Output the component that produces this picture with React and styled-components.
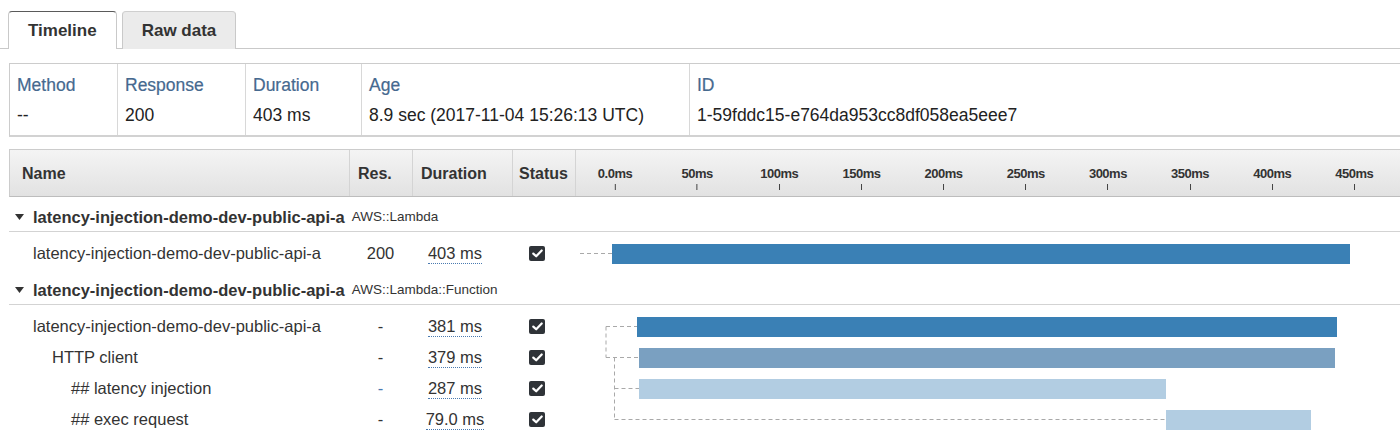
import React, { useState } from "react";
import styled, { createGlobalStyle } from "styled-components";

const GlobalStyle = createGlobalStyle`
  body {
    margin: 0;
    background: #ffffff;
    font-family: "Liberation Sans", Arial, Helvetica, sans-serif;
    color: #333333;
  }
`;

const MS_PX = 82.15 / 50;
const ZERO_X = 39;
const toX = (ms) => ZERO_X + ms * MS_PX;

const summary = [
  { label: "Method", value: "--", width: "108px" },
  { label: "Response", value: "200", width: "128px" },
  { label: "Duration", value: "403 ms", width: "116px" },
  { label: "Age", value: "8.9 sec (2017-11-04 15:26:13 UTC)", width: "328px" },
  { label: "ID", value: "1-59fddc15-e764da953cc8df058ea5eee7", width: "1fr" },
];

const ticks = [0, 50, 100, 150, 200, 250, 300, 350, 400, 450];

const groups = [
  {
    name: "latency-injection-demo-dev-public-api-a",
    type: "AWS::Lambda",
    rows: [
      { name: "latency-injection-demo-dev-public-api-a", level: 0, res: "200", duration: "403 ms", start: -1, end: 448 },
    ],
    links: [{ x: 5, from: 0, to: 0 }],
  },
  {
    name: "latency-injection-demo-dev-public-api-a",
    type: "AWS::Lambda::Function",
    rows: [
      { name: "latency-injection-demo-dev-public-api-a", level: 0, res: "-", duration: "381 ms", start: 14.3, end: 440 },
      { name: "HTTP client", level: 1, res: "-", duration: "379 ms", start: 15.5, end: 438.8 },
      { name: "## latency injection", level: 2, res: "-", duration: "287 ms", start: 15.5, end: 336, resBlue: true },
      { name: "## exec request", level: 2, res: "-", duration: "79.0 ms", start: 336, end: 424.2 },
    ],
    links: [
      { x: 31, from: 0, to: 1 },
      { x: 39.5, from: 1, to: 3, children: [2, 3] },
    ],
  },
];

const barColors = ["#3a80b5", "#7aa0c1", "#b2cde2"];
const COLS = "340px 63px 100px 63px 1fr";
const ROW_H = 31;

const Page = styled.div`
  padding-top: 11px;
  width: 1400px;
  overflow: hidden;
`;

const TabBar = styled.div`
  display: flex;
  gap: 5px;
  padding-left: 8px;
  border-bottom: 1px solid #c9c9c9;
  height: 37px;
`;

const Tab = styled.button`
  height: 38px;
  padding: 0 19px;
  font-family: inherit;
  font-size: 17px;
  font-weight: bold;
  color: #333;
  border: 1px solid #c9c9c9;
  border-bottom: none;
  border-top: ${(p) => (p.$active ? "1px solid #5a5a5a" : "1px solid #cfcfcf")};
  border-radius: 4px 4px 0 0;
  background: ${(p) => (p.$active ? "#ffffff" : "#ebebeb")};
  cursor: pointer;
  position: relative;
  z-index: ${(p) => (p.$active ? 1 : 0)};
`;

const Summary = styled.div`
  display: grid;
  grid-template-columns: ${summary.map((s) => s.width).join(" ")};
  margin: 14px 0 0 9px;
  border-top: 1px solid #cccccc;
  border-bottom: 2px solid #d2d2d2;
  border-left: 1px solid #cccccc;
`;

const SummaryCell = styled.div`
  display: flex;
  flex-direction: column;
  gap: 6px;
  padding: 9px 8px 8px 7px;
  border-right: 1px solid #d8d8d8;
  font-size: 17.5px;
  line-height: 24px;
  &:last-child {
    border-right: none;
  }
`;

const SummaryLabel = styled.div`
  color: #46698f;
  white-space: nowrap;
  -webkit-text-stroke: 0.2px #46698f;
`;

const SummaryValue = styled.div`
  color: #222;
  white-space: nowrap;
`;

const Table = styled.div`
  margin: 12px 0 0 9px;
`;

const HeaderRow = styled.div`
  display: grid;
  grid-template-columns: ${COLS};
  height: 46px;
  background: linear-gradient(#f4f4f4, #e2e2e2);
  border-top: 1px solid #cccccc;
  border-bottom: 1px solid #bdbdbd;
  border-left: 1px solid #cccccc;
`;

const HeadCell = styled.div`
  display: flex;
  align-items: center;
  padding-left: ${(p) => p.$pad || 8}px;
  padding-top: 2px;
  font-size: 16px;
  font-weight: bold;
  color: #333;
  border-right: 1px solid #d4d4d4;
  position: relative;
  &:last-child {
    border-right: none;
  }
`;

const Tick = styled.div`
  position: absolute;
  top: 16px;
  transform: translateX(-50%);
  display: flex;
  flex-direction: column;
  align-items: center;
  gap: 3px;
  font-size: 13px;
  line-height: 15px;
  letter-spacing: -0.5px;
  color: #333;
  &::after {
    content: "";
    width: 1px;
    height: 6px;
    background: #444;
  }
`;

const GroupRow = styled.div`
  display: flex;
  align-items: center;
  gap: 7px;
  height: 35px;
  padding: 8px 0 3px 6px;
  box-sizing: border-box;
  border-bottom: 1px solid #d3d3d3;
`;

const GroupName = styled.span`
  display: flex;
  align-items: center;
  gap: 9px;
  font-size: 16.5px;
  font-weight: bold;
  color: #333;
  line-height: 24px;
`;

const GroupType = styled.span`
  font-size: 13.5px;
  color: #333;
`;

const GroupBody = styled.div`
  position: relative;
  padding: ${(p) => p.$padTop}px 0 ${(p) => p.$padBottom}px;
`;

const Row = styled.div`
  display: grid;
  grid-template-columns: ${COLS};
  height: ${ROW_H}px;
  align-items: center;
  font-size: 16.5px;
  color: #333;
`;

const NameCell = styled.div`
  padding-left: ${(p) => 24 + p.$level * 19}px;
  white-space: nowrap;
`;

const ResCell = styled.div`
  text-align: center;
  color: ${(p) => (p.$blue ? "#4a7ab0" : "#333")};
`;

const DurationCell = styled.div`
  text-align: center;
  padding-right: 14px;
`;

const Dotted = styled.span`
  border-bottom: 1px dotted #4a7ab0;
  padding-bottom: 1px;
`;

const StatusCell = styled.div`
  padding-left: 17px;
  display: flex;
  align-items: center;
`;

const CheckBox = styled.span`
  width: 16px;
  height: 15px;
  border-radius: 2px;
  background: #2f3338;
  display: inline-flex;
  align-items: center;
  justify-content: center;
`;

const TimeCell = styled.div`
  position: relative;
  height: 100%;
`;

const Bar = styled.div`
  position: absolute;
  top: 5.5px;
  height: 20px;
  background: ${(p) => barColors[p.$level]};
`;

const Links = styled.svg`
  position: absolute;
  left: 566px;
  top: 0;
  width: 834px;
  height: 100%;
  pointer-events: none;
  overflow: visible;
`;

const Triangle = () => (
  <svg width="9" height="6" viewBox="0 0 9 6">
    <polygon points="0,0 9,0 4.5,6" fill="#333" />
  </svg>
);

const Check = () => (
  <svg width="11" height="9" viewBox="0 0 11 9">
    <path d="M1.3 4.6 L4.2 7.3 L9.7 1.5" stroke="#fff" strokeWidth="2.2" fill="none" strokeLinecap="round" strokeLinejoin="round" />
  </svg>
);

const GroupLinks = ({ group, padTop }) => {
  const cy = (i) => padTop + i * ROW_H + ROW_H / 2;
  const segs = [];
  group.links.forEach((l) => {
    if (l.from !== l.to) {
      segs.push(`M${l.x} ${cy(l.from)} V${cy(l.to)}`);
    }
    const targets = l.children || [l.from, l.to].filter((v, i, a) => a.indexOf(v) === i);
    targets.forEach((t) => {
      segs.push(`M${l.x} ${cy(t)} H${toX(group.rows[t].start)}`);
    });
  });
  return (
    <Links>
      <path d={segs.join(" ")} stroke="#a9a9a9" strokeWidth="1" strokeDasharray="4 3" fill="none" />
    </Links>
  );
};

export default function App() {
  const [tab, setTab] = useState("timeline");
  return (
    <Page>
      <GlobalStyle />
      <TabBar>
        <Tab $active={tab === "timeline"} onClick={() => setTab("timeline")}>Timeline</Tab>
        <Tab $active={tab === "raw"} onClick={() => setTab("raw")}>Raw data</Tab>
      </TabBar>

      <Summary>
        {summary.map((s) => (
          <SummaryCell key={s.label}>
            <SummaryLabel>{s.label}</SummaryLabel>
            <SummaryValue>{s.value}</SummaryValue>
          </SummaryCell>
        ))}
      </Summary>

      <Table>
        <HeaderRow>
          <HeadCell $pad={12}>Name</HeadCell>
          <HeadCell>Res.</HeadCell>
          <HeadCell>Duration</HeadCell>
          <HeadCell $pad={6}>Status</HeadCell>
          <HeadCell>
            {ticks.map((t) => (
              <Tick key={t} style={{ left: toX(t) }}>
                {t === 0 ? "0.0ms" : `${t}ms`}
              </Tick>
            ))}
          </HeadCell>
        </HeaderRow>

        {groups.map((g, gi) => {
          const padTop = gi === 0 ? 6 : 6;
          return (
            <React.Fragment key={gi}>
              <GroupRow>
                <GroupName>
                  <Triangle />
                  {g.name}
                </GroupName>
                <GroupType>{g.type}</GroupType>
              </GroupRow>
              <GroupBody $padTop={padTop} $padBottom={gi === 0 ? 1 : 10}>
                <GroupLinks group={g} padTop={padTop} />
                {g.rows.map((r, ri) => (
                  <Row key={ri}>
                    <NameCell $level={r.level}>{r.name}</NameCell>
                    <ResCell $blue={r.resBlue}>{r.res}</ResCell>
                    <DurationCell>
                      <Dotted>{r.duration}</Dotted>
                    </DurationCell>
                    <StatusCell>
                      <CheckBox>
                        <Check />
                      </CheckBox>
                    </StatusCell>
                    <TimeCell>
                      <Bar
                        $level={r.level}
                        style={{ left: toX(r.start), width: toX(r.end) - toX(r.start) }}
                      />
                    </TimeCell>
                  </Row>
                ))}
              </GroupBody>
            </React.Fragment>
          );
        })}
      </Table>
    </Page>
  );
}
